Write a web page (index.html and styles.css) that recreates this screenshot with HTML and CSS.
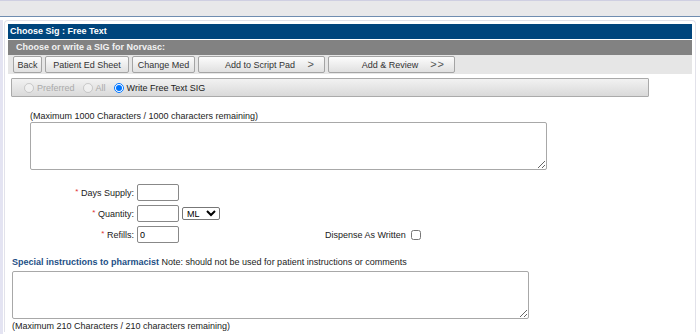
FILE: index.html
```html
<!DOCTYPE html>
<html lang="en">
<head>
  <meta charset="UTF-8">
  <title>Choose Sig</title>
  <link rel="stylesheet" href="styles.css">
</head>
<body>

  <!-- top strip -->
  <div class="topbar"></div>

  <div class="page">
    <div class="panel">
      <div class="title">Choose Sig : Free Text</div>
      <div class="subtitle">Choose or write a SIG for Norvasc:</div>

      <div class="toolbar">
        <button class="btn btn-back">Back</button>
        <button class="btn btn-ed">Patient Ed Sheet</button>
        <button class="btn btn-med">Change Med</button>
        <button class="btn btn-wide">Add to Script Pad <span class="arrow">&gt;</span></button>
        <button class="btn btn-wide">Add &amp; Review <span class="arrow">&gt;&gt;</span></button>
      </div>

      <div class="sigtype">
        <label class="off"><input type="radio" name="sig" disabled>Preferred</label>
        <label class="off"><input type="radio" name="sig" disabled>All</label>
        <label><input type="radio" name="sig" checked>Write Free Text SIG</label>
      </div>

      <div class="freetext">
        <p class="hint">(Maximum 1000 Characters / 1000 characters remaining)</p>
        <textarea class="sig-text"></textarea>
      </div>

      <div class="fields">
        <div class="row">
          <label class="lbl"><span class="req">*</span> Days Supply:</label>
          <input type="text" class="num">
        </div>
        <div class="row">
          <label class="lbl"><span class="req">*</span> Quantity:</label>
          <input type="text" class="num">
          <select class="unit"><option>ML</option></select>
        </div>
        <div class="row">
          <label class="lbl"><span class="req">*</span> Refills:</label>
          <input type="text" class="num" value="0">
          <label class="daw">Dispense As Written <input type="checkbox"></label>
        </div>
      </div>

      <div class="special">
        <p><b>Special instructions to pharmacist</b> Note: should not be used for patient instructions or comments</p>
        <textarea class="pharm-text"></textarea>
        <p class="hint">(Maximum 210 Characters / 210 characters remaining)</p>
      </div>
    </div>
  </div>

</body>
</html>
```

FILE: styles.css
```css
* {box-sizing:border-box; margin:0; padding:0;}
body {
  font-family:"Liberation Sans",Arial,sans-serif; font-size:9px;
  color:#222; background:#fff; overflow:hidden;
}

.topbar {
  height:17px; background:#e8e8ea;
  border-top:1px solid #cfcfe2; border-bottom:1px solid #6f8db0;
}
.page {border-left:3px solid #e4e4f2; height:317px;}
.panel {
  margin:3px 4px 0 1px; padding:3px 3px 0;
  border:1px solid #e2e2ea; border-bottom:none; border-radius:4px 4px 0 0;
}

.title {
  background:#00457c; color:#fff; font-weight:bold;
  height:15px; line-height:15px; padding-left:2px;
}
.subtitle {
  background:#828282; color:#f2f2f2; font-weight:bold;
  height:15px; line-height:15px; padding-left:8px; margin-top:1px;
}

.toolbar {
  display:flex; gap:3px; align-items:center;
  background:#e6e6e6; height:19px; padding:0 5px;
}
.btn {
  font:inherit; color:#333; height:17px; padding:0 3px; white-space:nowrap;
  border:1px solid #a4a4a4; border-radius:2px;
  background:linear-gradient(#fcfcfc,#e0e0e0);
}
.btn-back {width:29px;}
.btn-ed {width:84px;}
.btn-med {width:63px;}
.btn-wide {width:127px; position:relative; padding-right:6px;}
.btn-wide .arrow {position:absolute; right:9px; top:1px; font-size:11px; color:#555; letter-spacing:1px;}

.sigtype {
  display:flex; align-items:center; gap:8px;
  margin:4px 0 0 3px; width:638px; height:19px; padding-left:12px;
  border:1px solid #aaa; border-radius:1px;
  background:linear-gradient(#f2f2f2,#d9d9d9);
}
.sigtype label {display:flex; align-items:center; gap:3px;}
.sigtype label.off {color:#aaa;}
.sigtype input {width:10px; height:10px; margin:0;}

.freetext {padding:14px 0 0 22px;}
.hint {line-height:10px; color:#222;}
.sig-text {
  display:block; width:517px; height:48px; margin-top:1px;
  border:1px solid #a8a8a8; border-radius:2px; resize:both;
}

.fields {margin-top:12px;}
.row {display:flex; align-items:center; height:21px;}
.lbl {width:126px; text-align:right; margin-right:3px;}
.req {color:#e03030; font-size:8px; vertical-align:2px;}
.num {
  width:42px; height:17px; font:inherit; padding:1px 2px;
  border:1px solid #888; border-radius:2px;
}
.unit {
  margin-left:3px; width:38px; height:13px; font:inherit;
  border:1px solid #777; border-radius:2px; background:#fff;
}
.daw {display:flex; align-items:center; gap:5px; margin-left:146px;}
.daw input {width:10px; height:10px; margin:0;}

.special {padding:12px 0 0 4px;}
.special p {line-height:11px;}
.special b {color:#1d4f86;}
.pharm-text {
  display:block; width:517px; height:48px; margin:3px 0 2px;
  border:1px solid #a8a8a8; border-radius:2px; resize:both;
}
```
